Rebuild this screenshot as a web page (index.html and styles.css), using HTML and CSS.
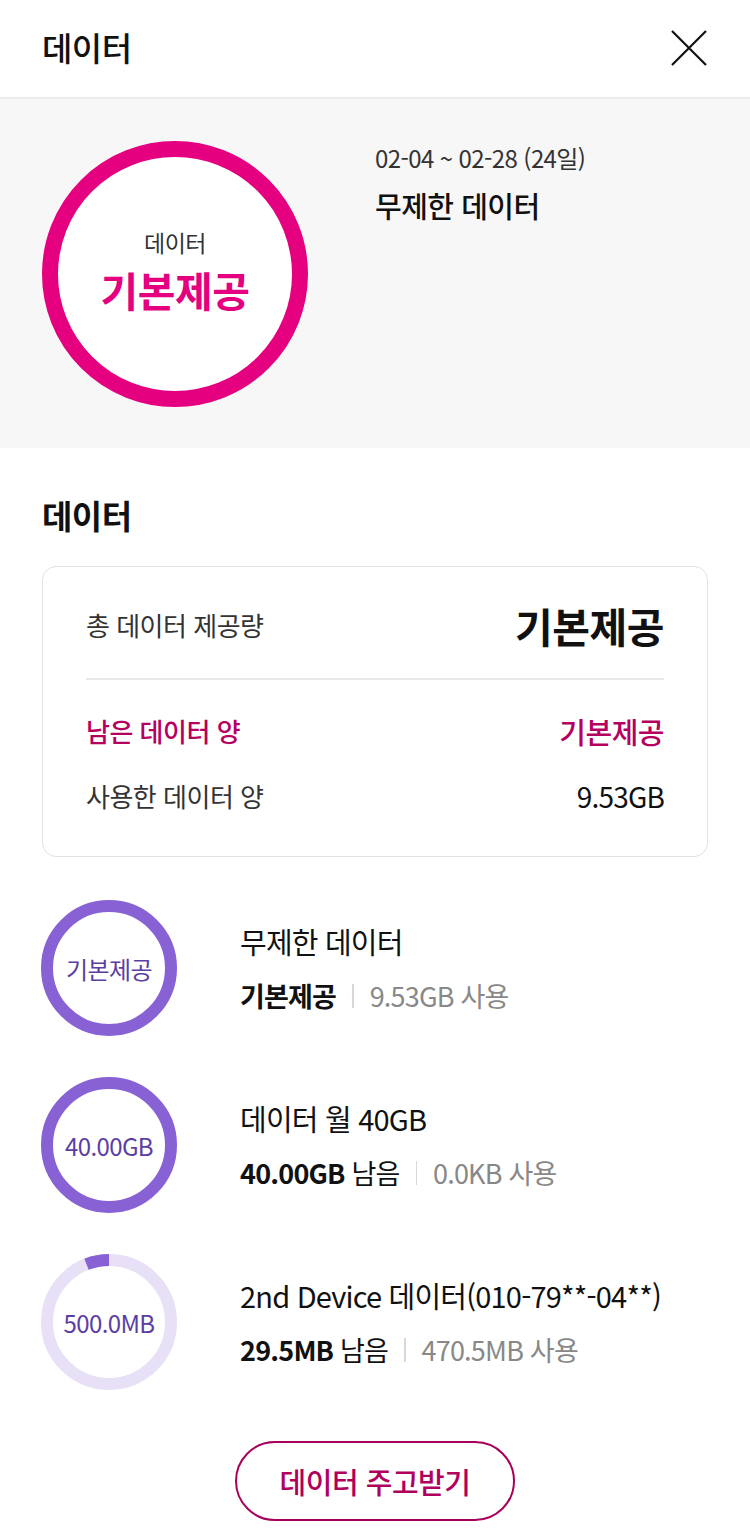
FILE: index.html
```html
<!DOCTYPE html>
<html lang="ko">
<head>
<meta charset="utf-8">
<link rel="stylesheet" href="styles.css">
</head>
<body>
<header class="top">
  <h1 class="top-title">데이터</h1>
  <svg class="close" width="36" height="36" viewBox="0 0 36 36"><path d="M1 1 L35 35 M35 1 L1 35" stroke="#111" stroke-width="2.2" fill="none"/></svg>
</header>

<section class="hero">
  <div class="ring-big">
    <svg class="ring-svg" width="266" height="266" viewBox="0 0 266 266"><circle cx="133" cy="133" r="125" fill="#fff" stroke="#e4007f" stroke-width="16"/></svg>
    <div class="ring-big-text">
      <div class="rb-label">데이터</div>
      <div class="rb-value">기본제공</div>
    </div>
  </div>
  <div class="hero-info">
    <div class="hero-date">02-04 ~ 02-28 (24일)</div>
    <div class="hero-plan">무제한 데이터</div>
  </div>
</section>

<h2 class="sec-title">데이터</h2>

<div class="card">
  <div class="row row-total">
    <span class="row-label">총 데이터 제공량</span>
    <span class="total-val">기본제공</span>
  </div>
  <div class="divider"></div>
  <div class="row row-remain">
    <span class="row-label pink">남은 데이터 양</span>
    <span class="row-val pink">기본제공</span>
  </div>
  <div class="row row-used">
    <span class="row-label">사용한 데이터 양</span>
    <span class="row-val">9.53GB</span>
  </div>
</div>

<ul class="list">
  <li class="item">
    <div class="ring-sm">
      <svg class="ring-svg" width="136" height="136" viewBox="0 0 136 136"><circle cx="68" cy="68" r="62" fill="#fff" stroke="#8862d5" stroke-width="12"/></svg>
      <span class="ring-sm-text">기본제공</span>
    </div>
    <div class="item-info">
      <div class="item-title">무제한 데이터</div>
      <div class="item-sub"><b>기본제공</b><i class="sep"></i><span class="gray">9.53GB 사용</span></div>
    </div>
  </li>
  <li class="item">
    <div class="ring-sm">
      <svg class="ring-svg" width="136" height="136" viewBox="0 0 136 136"><circle cx="68" cy="68" r="62" fill="#fff" stroke="#8862d5" stroke-width="12"/></svg>
      <span class="ring-sm-text">40.00GB</span>
    </div>
    <div class="item-info">
      <div class="item-title">데이터 월 40GB</div>
      <div class="item-sub"><b>40.00GB</b>&nbsp;남음<i class="sep"></i><span class="gray">0.0KB 사용</span></div>
    </div>
  </li>
  <li class="item">
    <div class="ring-sm">
      <svg class="ring-svg" width="136" height="136" viewBox="0 0 136 136">
        <circle cx="68" cy="68" r="62" fill="#fff" stroke="#e7e0f6" stroke-width="12"/>
        <circle cx="68" cy="68" r="62" fill="none" stroke="#8862d5" stroke-width="12" stroke-dasharray="23 400" transform="translate(136 0) scale(-1 1) rotate(-90 68 68)"/>
      </svg>
      <span class="ring-sm-text">500.0MB</span>
    </div>
    <div class="item-info">
      <div class="item-title">2nd Device 데이터(010-79**-04**)</div>
      <div class="item-sub"><b>29.5MB</b>&nbsp;남음<i class="sep"></i><span class="gray">470.5MB 사용</span></div>
    </div>
  </li>
</ul>

<div class="btn-wrap">
  <button class="btn">데이터 주고받기</button>
</div>
</body>
</html>
```

FILE: styles.css
```css
* { box-sizing: border-box; }
html, body { margin: 0; padding: 0; }
body {
  width: 750px;
  background: #fff;
  color: #111;
  font-family: "Noto Sans CJK KR", "Noto Sans", sans-serif;
}
.top {
  height: 99px;
  border-bottom: 2px solid #ececec;
  display: flex;
  align-items: center;
  justify-content: space-between;
  padding: 0 43px 4px 42px;
}
.top-title {
  margin: 0;
  font-size: 33px;
  font-weight: 500;
  line-height: 48px;
  letter-spacing: -0.5px;
}
.close { display: block; margin-top: 2px; }

.hero {
  background: #f7f7f7;
  height: 349px;
  display: flex;
  align-items: flex-start;
  padding: 42px 42px 0 42px;
  gap: 67px;
}
.ring-big {
  width: 266px;
  height: 266px;
  display: grid;
  place-items: center;
  flex: none;
}
.ring-svg { grid-area: 1 / 1; display: block; }
.ring-big-text {
  grid-area: 1 / 1;
  text-align: center;
  padding-bottom: 4px;
}
.rb-label { font-size: 23px; line-height: 34px; color: #333; font-weight: 400; letter-spacing: -0.5px; }
.rb-value { font-size: 41px; line-height: 60px; color: #e4007f; font-weight: 700; letter-spacing: -0.5px; }

.hero-info { padding-top: 0; }
.hero-date { font-size: 24px; line-height: 34px; color: #333; font-weight: 400; letter-spacing: -0.6px; }
.hero-plan { font-size: 29px; line-height: 42px; color: #111; font-weight: 500; margin-top: 9px; letter-spacing: -0.5px; }

.sec-title {
  margin: 44px 42px 0 42px;
  font-size: 33px;
  line-height: 46px;
  font-weight: 700;
  letter-spacing: -0.5px;
}

.card {
  margin: 28px 42px 0 42px;
  border: 1.5px solid #e2e2e2;
  border-radius: 14px;
  padding: 33px 43px 43px 43px;
}
.row { display: flex; align-items: center; justify-content: space-between; }
.row-total { height: 50px; }
.row-label { font-size: 26px; line-height: 38px; color: #333; letter-spacing: -0.5px; }
.total-val { font-size: 41px; font-weight: 700; line-height: 60px; color: #111; letter-spacing: -0.5px; }
.divider { height: 2px; background: #e8e8e8; margin: 28px 0 34px 0; }
.row-remain { height: 34px; }
.row-used { height: 34px; margin-top: 31px; }
.row-val { font-size: 28px; line-height: 40px; color: #111; letter-spacing: -0.8px; }
.pink { color: #b5005f; font-weight: 500; }
.row-val.pink { font-size: 29px; letter-spacing: -0.5px; }

.list {
  list-style: none;
  margin: 43px 0 0 0;
  padding: 0 0 0 41px;
  display: flex;
  flex-direction: column;
  gap: 41px;
}
.item { display: flex; align-items: center; gap: 63px; height: 136px; }
.ring-sm { width: 136px; height: 136px; display: grid; place-items: center; flex: none; }
.ring-sm-text { grid-area: 1 / 1; font-size: 24px; color: #5b3ea3; letter-spacing: -0.6px; }
.item-info { display: flex; flex-direction: column; gap: 14px; }
.item-title { font-size: 29px; line-height: 42px; color: #111; letter-spacing: -0.8px; }
.item-sub { font-size: 27px; line-height: 40px; display: flex; align-items: center; color: #111; letter-spacing: -0.8px; }
.item-sub b { font-weight: 700; }
.sep { display: inline-block; width: 1.5px; height: 24px; background: #d8d8d8; margin: 0 16px; }
.gray { color: #888; }

.btn-wrap { display: flex; justify-content: center; margin-top: 51px; }
.btn {
  width: 280px;
  height: 80px;
  border: 2px solid #a8005a;
  border-radius: 40px;
  background: #fff;
  color: #b0005e;
  font-family: "Noto Sans CJK KR", "Noto Sans", sans-serif;
  font-size: 29px;
  font-weight: 500;
  letter-spacing: -0.5px;
  padding: 0;
}
```
